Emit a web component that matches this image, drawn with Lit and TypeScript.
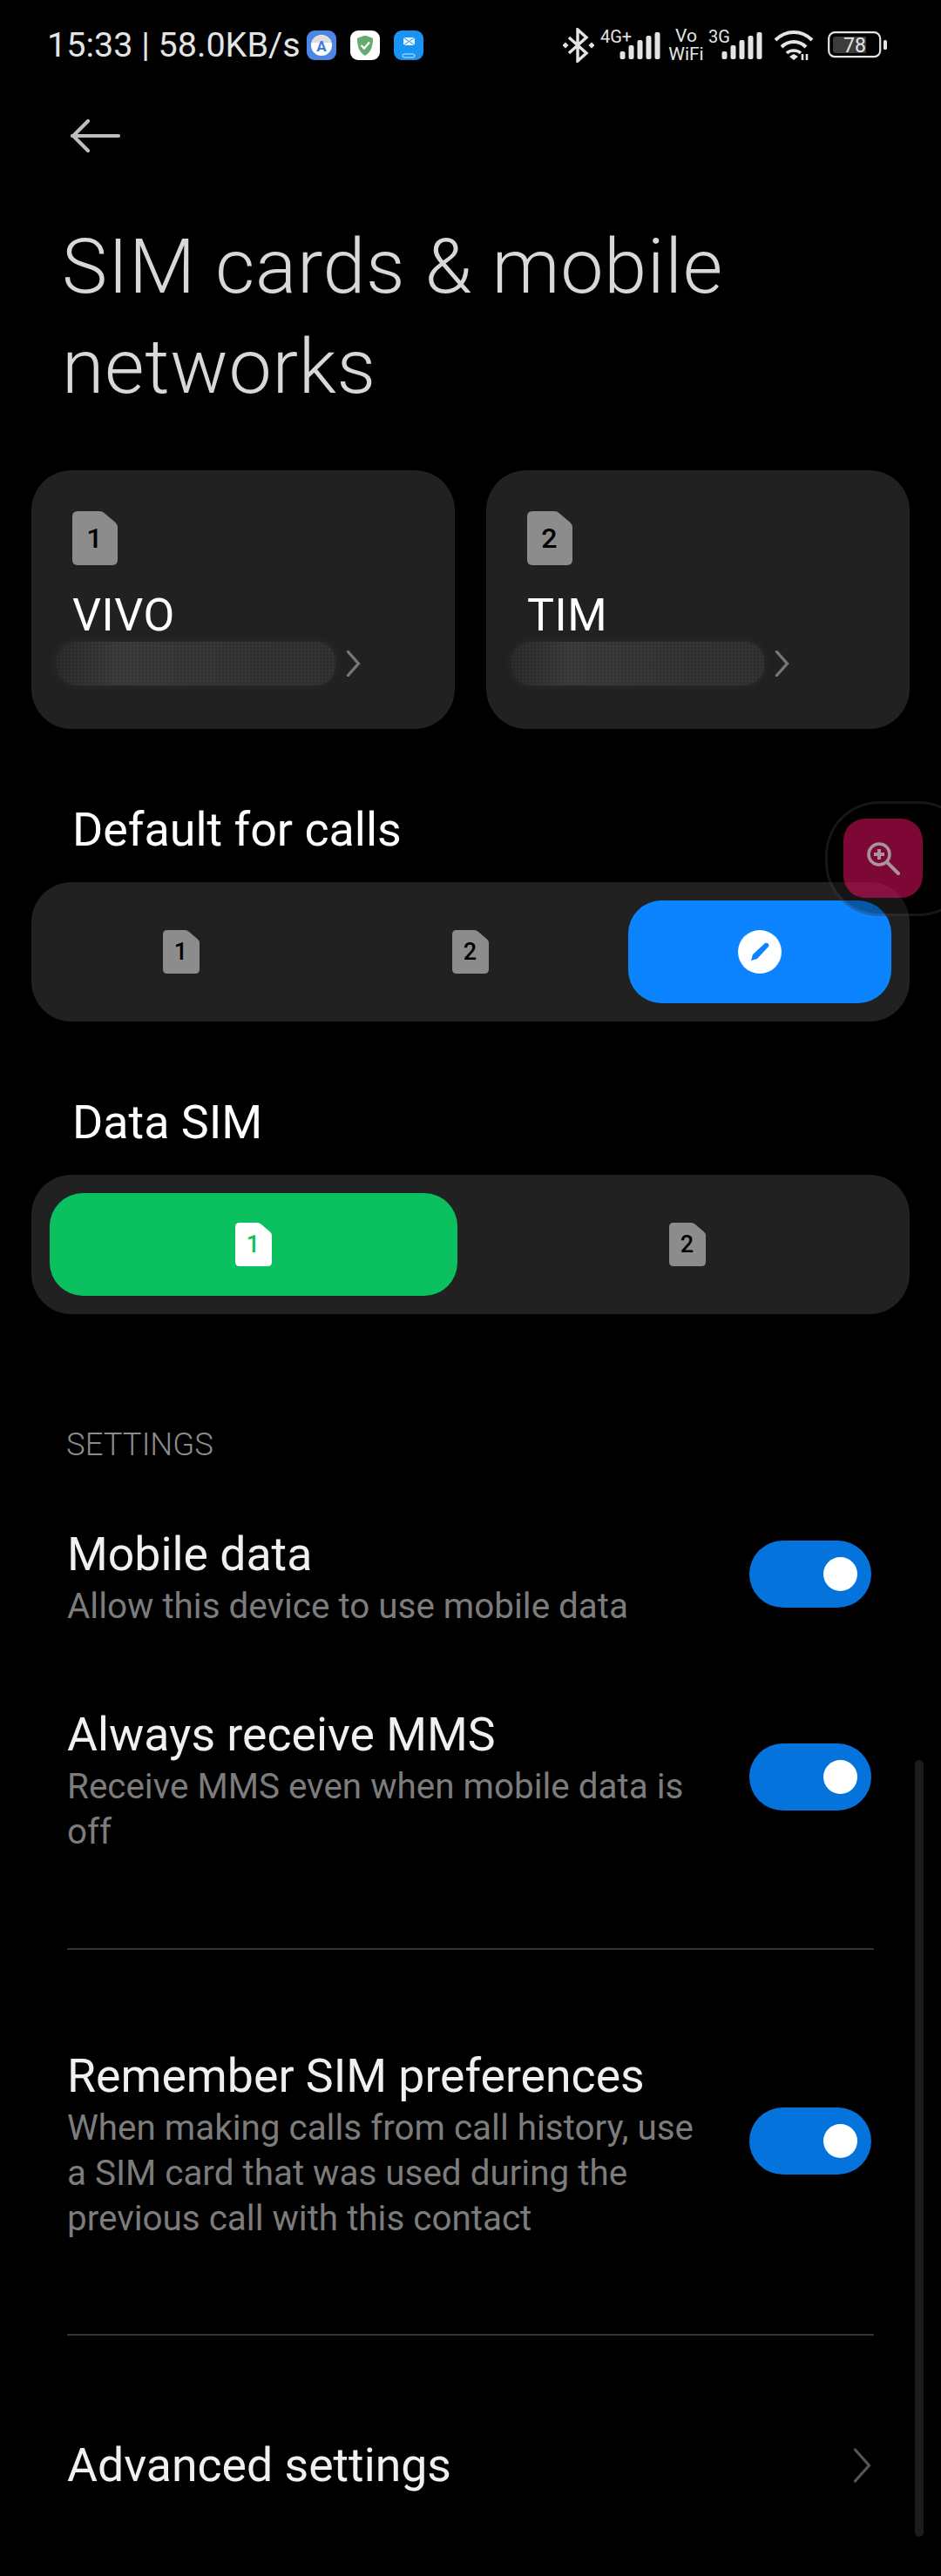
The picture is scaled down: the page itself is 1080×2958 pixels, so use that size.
import { LitElement, html, css, svg } from 'lit';
import { customElement } from 'lit/decorators.js';

const simCard = (n: string, bg: string, fg: string, w: number, h: number, fs: number) => html`
  <svg width=${w} height=${h} viewBox="0 0 42 50">
    <path d="M5 0H25Q28 0 30 2L40 10.5Q42 12.5 42 15V45Q42 50 37 50H5Q0 50 0 45V5Q0 0 5 0Z" fill=${bg}></path>
    <text x="20.5" y="33.5" text-anchor="middle" fill=${fg} font-size=${fs} font-weight="500" font-family="Roboto, sans-serif">${n}</text>
  </svg>
`;

const chevron = (w: number, h: number, color: string, weight: number) => html`
  <svg width=${w} height=${h} viewBox="0 0 20 40" fill="none">
    <path d="M2 2 L18 20 L2 38" stroke=${color} stroke-width=${weight} stroke-linecap="round"></path>
  </svg>
`;

const bars = svg`
  <rect x="0" y="22" width="6" height="9" rx="2"></rect>
  <rect x="10" y="15" width="6" height="16" rx="2"></rect>
  <rect x="20" y="9" width="6" height="22" rx="2"></rect>
  <rect x="30" y="4" width="6" height="27" rx="2"></rect>
  <rect x="40" y="0" width="6" height="31" rx="2"></rect>
`;

@customElement('app-root')
export class AppRoot extends LitElement {
  static styles = css`
    :host {
      display: block;
      width: 1080px;
      height: 2958px;
      background: #000;
      color: #fff;
      font-family: Roboto, 'Noto Sans', sans-serif;
      position: relative;
      overflow: hidden;
    }
    svg { display: block; }

    .status {
      height: 104px;
      padding: 34px 0 0 54px;
      box-sizing: border-box;
      display: flex;
      align-items: flex-start;
      color: #e4e4e4;
    }
    .status-text {
      font-size: 39.5px;
      line-height: 36px;
      white-space: nowrap;
    }
    .app-icons { display: flex; gap: 16px; margin-left: 7px; padding-top: 1px; }
    .status-right {
      margin: -2px 62px 0 auto;
      display: flex;
      align-items: center;
      height: 40px;
    }
    .net {
      position: relative;
      height: 40px;
      margin-left: 7px;
      width: 69px;
    }
    .net.second { width: 62px; margin-left: 5px; }
    .net span {
      position: absolute;
      left: 0;
      top: 0;
      font-size: 20px;
      line-height: 20px;
    }
    .net svg { position: absolute; right: 0; bottom: 4px; }
    .vowifi {
      margin-left: 9px;
      width: 41px;
      text-align: center;
      font-size: 21px;
      line-height: 21px;
    }
    .wifi { margin-left: 13px; }
    .battery { margin-left: 16px; }

    .back { margin: 32px 0 0 81px; height: 38px; }

    h1 {
      margin: 74px 0 0 71px;
      font-size: 88px;
      line-height: 115px;
      font-weight: 300;
      color: #d8d8d8;
      letter-spacing: 0.7px;
    }

    .cards {
      display: grid;
      grid-template-columns: 486px 486px;
      gap: 36px;
      margin: 62px 0 0 36px;
    }
    .card {
      height: 297px;
      box-sizing: border-box;
      border-radius: 46px;
      background: #212121;
      padding: 47px 0 0 47px;
    }
    .card-name {
      font-size: 52px;
      line-height: 60px;
      margin-top: 28px;
      letter-spacing: 0.5px;
    }
    .blur-row {
      display: flex;
      align-items: center;
      margin: 0 0 0 -18px;
    }
    .smudge {
      height: 50px;
      border-radius: 22px;
      margin-right: 12px;
      background:
        repeating-linear-gradient(90deg, rgba(255, 255, 255, 0.018) 0 2px, transparent 2px 4px),
        repeating-linear-gradient(0deg, rgba(255, 255, 255, 0.018) 0 2px, transparent 2px 4px),
        linear-gradient(90deg, #252525, #353535 22%, #2e2e2e 70%, #2c2c2c);
      box-shadow: 0 0 7px 2px #292929;
    }

    .group-title {
      font-size: 53.8px;
      line-height: 60px;
      margin: 86px 0 0 83px;
      font-weight: 400;
    }
    .segmented {
      margin: 30px 0 0 36px;
      width: 1008px;
      height: 160px;
      box-sizing: border-box;
      padding: 21px;
      border-radius: 46px;
      background: #212121;
      display: grid;
      gap: 30px;
    }
    .three { grid-template-columns: repeat(3, 1fr); }
    .two { grid-template-columns: repeat(2, 1fr); }
    .seg {
      border-radius: 38px;
      display: flex;
      align-items: center;
      justify-content: center;
    }
    .seg.blue { background: #0d84ff; }
    .seg.green { background: #0ac05f; }

    .settings-label {
      margin: 128px 0 0 76px;
      font-size: 36.5px;
      line-height: 44px;
      font-weight: 300;
      color: #8c8c8c;
    }
    .row {
      display: flex;
      justify-content: space-between;
      align-items: center;
      padding: 0 80px 0 77px;
    }
    .row.first { padding-top: 73px; }
    .row.second { padding-top: 90px; }
    .row.third { padding-top: 114px; }
    .row-text { width: 740px; }
    .row-title {
      font-size: 53.6px;
      line-height: 62px;
      color: #f0f0f0;
      margin-bottom: 3px;
    }
    .row-sub { font-size: 40.4px; line-height: 52px; color: #7c7c7c; }
    .toggle {
      width: 140px;
      height: 77px;
      margin-bottom: 10px;
      border-radius: 39px;
      background: #0474dc;
      flex: none;
      display: flex;
      align-items: center;
      justify-content: flex-end;
      padding-right: 16px;
      box-sizing: border-box;
    }
    .knob { width: 39px; height: 39px; border-radius: 50%; background: #fff; }
    .divider { height: 2px; margin: 107px 77px 0; background: #333; }
    .divider.low { margin-top: 106px; }

    .advanced {
      display: flex;
      justify-content: space-between;
      align-items: center;
      padding: 0 80px 0 77px;
      margin-top: 117px;
    }
    .advanced span {
      font-size: 53.6px;
      line-height: 64px;
      color: #f0f0f0;
    }

    .scrollbar {
      position: absolute;
      left: 1050px;
      top: 2021px;
      width: 10px;
      height: 892px;
      border-radius: 5px;
      background: #1c1c1c;
    }
    .float-ring {
      position: absolute;
      left: 947px;
      top: 920px;
      width: 170px;
      height: 132px;
      box-sizing: border-box;
      border: 3px solid rgba(255, 255, 255, 0.09);
      border-radius: 62px;
      background: rgba(0, 0, 0, 0.35);
    }
    .float-btn {
      position: absolute;
      left: 968px;
      top: 940px;
      width: 91px;
      height: 91px;
      border-radius: 25px;
      background: rgba(250, 16, 108, 0.5);
      display: flex;
      align-items: center;
      justify-content: center;
    }
  `;

  private statusBar() {
    return html`
      <div class="status">
        <div class="status-text">15:33 | 58.0KB/s</div>
        <div class="app-icons">
          <svg width="34" height="34" viewBox="0 0 34 34">
            <rect width="34" height="34" rx="9" fill="#4f86e3"></rect>
            <circle cx="17" cy="17" r="12" fill="#fff"></circle>
            <path d="M5.5 14A12 12 0 0 1 28.5 14Z" fill="#dedede"></path>
            <text x="17" y="23.5" text-anchor="middle" font-size="17" font-weight="700" fill="#3f78dc" font-family="Roboto, sans-serif">A</text>
          </svg>
          <svg width="34" height="34" viewBox="0 0 34 34">
            <rect width="34" height="34" rx="9" fill="#fff"></rect>
            <path d="M17 6C14 6 11 8 8 9C8 18 10 25 17 29C24 25 26 18 26 9C23 8 20 6 17 6Z" fill="#63ab6e"></path>
            <path d="M12.5 17L16 20.5L22 13.5" fill="none" stroke="#fff" stroke-width="2.4"></path>
          </svg>
          <svg width="34" height="34" viewBox="0 0 34 34">
            <rect width="34" height="34" rx="9" fill="#1994f2"></rect>
            <rect x="11" y="8" width="13" height="9" rx="1.5" fill="#e8f4ff"></rect>
            <path d="M11 8L24 17M24 8L11 17" stroke="#1994f2" stroke-width="1"></path>
            <rect x="10" y="27" width="14" height="4" rx="2" fill="none" stroke="#cfe8ff" stroke-width="1"></rect>
          </svg>
        </div>
        <div class="status-right">
          <svg width="36" height="40" viewBox="0 0 36 40" fill="none">
            <path d="M7 11L27 29L17 38V2L27 11L7 29" stroke="#e4e4e4" stroke-width="3.4"></path>
            <rect x="0.5" y="17.5" width="5" height="5" transform="rotate(45 3 20)" fill="#e4e4e4"></rect>
            <rect x="30.5" y="17.5" width="5" height="5" transform="rotate(45 33 20)" fill="#e4e4e4"></rect>
          </svg>
          <div class="net">
            <span>4G+</span>
            <svg width="47" height="31" viewBox="0 0 46 31" fill="#e4e4e4">${bars}</svg>
          </div>
          <div class="vowifi">Vo<br />WiFi</div>
          <div class="net second">
            <span>3G</span>
            <svg width="47" height="31" viewBox="0 0 46 31" fill="#e4e4e4">${bars}</svg>
          </div>
          <svg class="wifi" width="46" height="36" viewBox="0 0 46 36" fill="none">
            <path d="M2 12C14 -0 32 -0 44 12" stroke="#e4e4e4" stroke-width="4"></path>
            <path d="M9 20C17 12 29 12 37 20" stroke="#e4e4e4" stroke-width="4"></path>
            <path d="M15 27C19 23 27 23 31 27" stroke="#e4e4e4" stroke-width="3.6"></path>
            <path d="M18 31L23 28L28 31L23 35Z" fill="#e4e4e4"></path>
            <path d="M33 35V28M38 35V28" stroke="#e4e4e4" stroke-width="2.6"></path>
          </svg>
          <svg class="battery" width="68" height="32" viewBox="0 0 68 32" fill="none">
            <rect x="1.2" y="1.2" width="59" height="28" rx="7" stroke="#e4e4e4" stroke-width="2.2"></rect>
            <path d="M9 6H44V25H9Q6 25 6 22V9Q6 6 9 6Z" fill="#3c3c3c"></path>
            <rect x="64" y="10" width="4" height="11" rx="1.6" fill="#e4e4e4"></rect>
            <text x="31" y="24" text-anchor="middle" fill="#e4e4e4" font-size="23" font-family="Roboto, sans-serif">78</text>
          </svg>
        </div>
      </div>
    `;
  }

  private simTile(n: string, name: string, blur: number) {
    return html`
      <div class="card">
        ${simCard(n, '#8c8c8c', '#000', 52, 62, 26)}
        <div class="card-name">${name}</div>
        <div class="blur-row">
          <div class="smudge" style="width:${blur}px"></div>
          ${chevron(17, 30, '#777', 4.4)}
        </div>
      </div>
    `;
  }

  private settingRow(cls: string, title: string, sub: string[]) {
    return html`
      <div class="row ${cls}">
        <div class="row-text">
          <div class="row-title">${title}</div>
          <div class="row-sub">${sub.map((l) => html`<div>${l}</div>`)}</div>
        </div>
        <div class="toggle"><div class="knob"></div></div>
      </div>
    `;
  }

  render() {
    return html`
      ${this.statusBar()}
      <div class="back">
        <svg width="58" height="40" viewBox="0 0 58 40" fill="none">
          <path d="M2 20H55M20 3L3 20L20 37" stroke="#bdbdbd" stroke-width="4.2" stroke-linecap="round" stroke-linejoin="round"></path>
        </svg>
      </div>
      <h1>SIM cards &amp; mobile<br />networks</h1>

      <div class="cards">
        ${this.simTile('1', 'VIVO', 320)}
        ${this.simTile('2', 'TIM', 290)}
      </div>

      <div class="group-title">Default for calls</div>
      <div class="segmented three">
        <div class="seg">${simCard('1', '#8c8c8c', '#000', 42, 50, 27)}</div>
        <div class="seg">${simCard('2', '#8c8c8c', '#000', 42, 50, 27)}</div>
        <div class="seg blue">
          <svg width="50" height="50" viewBox="0 0 50 50">
            <circle cx="25" cy="25" r="25" fill="#fff"></circle>
            <path d="M15 35L17 28L31 15Q33 14 35 16Q36 18 35 19L22 33Z" fill="#0d84ff"></path>
          </svg>
        </div>
      </div>

      <div class="group-title">Data SIM</div>
      <div class="segmented two">
        <div class="seg green">${simCard('1', '#fff', '#0ac05f', 42, 50, 27)}</div>
        <div class="seg">${simCard('2', '#8c8c8c', '#000', 42, 50, 27)}</div>
      </div>

      <div class="settings-label">SETTINGS</div>
      ${this.settingRow('first', 'Mobile data', ['Allow this device to use mobile data'])}
      ${this.settingRow('second', 'Always receive MMS', ['Receive MMS even when mobile data is', 'off'])}
      <div class="divider"></div>
      ${this.settingRow('third', 'Remember SIM preferences', ['When making calls from call history, use', 'a SIM card that was used during the', 'previous call with this contact'])}
      <div class="divider low"></div>
      <div class="advanced">
        <span>Advanced settings</span>
        ${chevron(21, 40, '#555', 3.2)}
      </div>

      <div class="scrollbar"></div>
      <div class="float-ring"></div>
      <div class="float-btn">
        <svg width="38" height="38" viewBox="0 0 38 38" fill="none">
          <circle cx="14" cy="14" r="12" stroke="#a8949c" stroke-width="3.6"></circle>
          <path d="M23 23L36 36" stroke="#a8949c" stroke-width="4" stroke-linecap="round"></path>
          <path d="M14 8V20M8 14H20" stroke="#a8949c" stroke-width="4"></path>
        </svg>
      </div>
    `;
  }
}
